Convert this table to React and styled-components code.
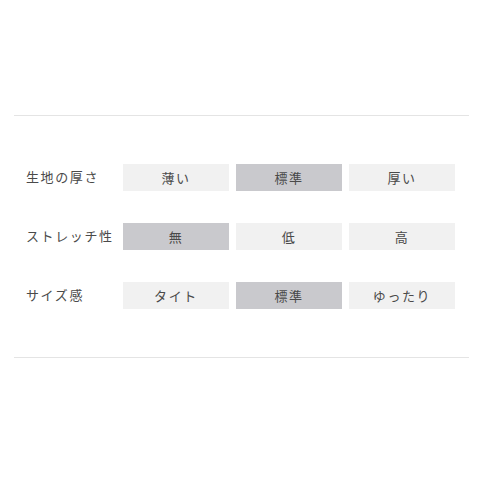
import React from "react";
import styled, { createGlobalStyle } from "styled-components";

const GlobalStyle = createGlobalStyle`
  html, body {
    margin: 0;
    padding: 0;
    background: #fff;
  }
  body {
    font-family: "Noto Sans CJK JP", "Noto Sans", sans-serif;
  }
`;

const rows = [
  { label: "生地の厚さ", options: ["薄い", "標準", "厚い"], selected: 1 },
  { label: "ストレッチ性", options: ["無", "低", "高"], selected: 0 },
  { label: "サイズ感", options: ["タイト", "標準", "ゆったり"], selected: 1 },
];

const Page = styled.div`
  padding: 115px 11px 0 14px;
`;

const Section = styled.section`
  border-top: 1px solid #e4e4e4;
  border-bottom: 1px solid #e4e4e4;
  padding: 48px 13px 48px 12px;
  display: flex;
  flex-direction: column;
  gap: 32px;
`;

const Row = styled.div`
  display: grid;
  grid-template-columns: 90px repeat(3, 106px);
  column-gap: 7px;
  align-items: center;
  height: 27px;
`;

const Label = styled.div`
  font-size: 13px;
  letter-spacing: 1.6px;
  color: #4a4a4a;
  white-space: nowrap;
  margin-top: -2px;
`;

const Option = styled.div`
  height: 27px;
  display: flex;
  align-items: center;
  justify-content: center;
  font-size: 13px;
  letter-spacing: 1.6px;
  color: #4a4a4a;
  background: ${(p) => (p.$active ? "#c9c9cd" : "#f1f1f1")};
`;

const App = () => {
  return (
    <>
      <GlobalStyle />
      <Page>
        <Section>
          {rows.map((row) => (
            <Row key={row.label}>
              <Label>{row.label}</Label>
              {row.options.map((opt, i) => (
                <Option key={opt} $active={i === row.selected}>
                  {opt}
                </Option>
              ))}
            </Row>
          ))}
        </Section>
      </Page>
    </>
  );
};

export default App;
